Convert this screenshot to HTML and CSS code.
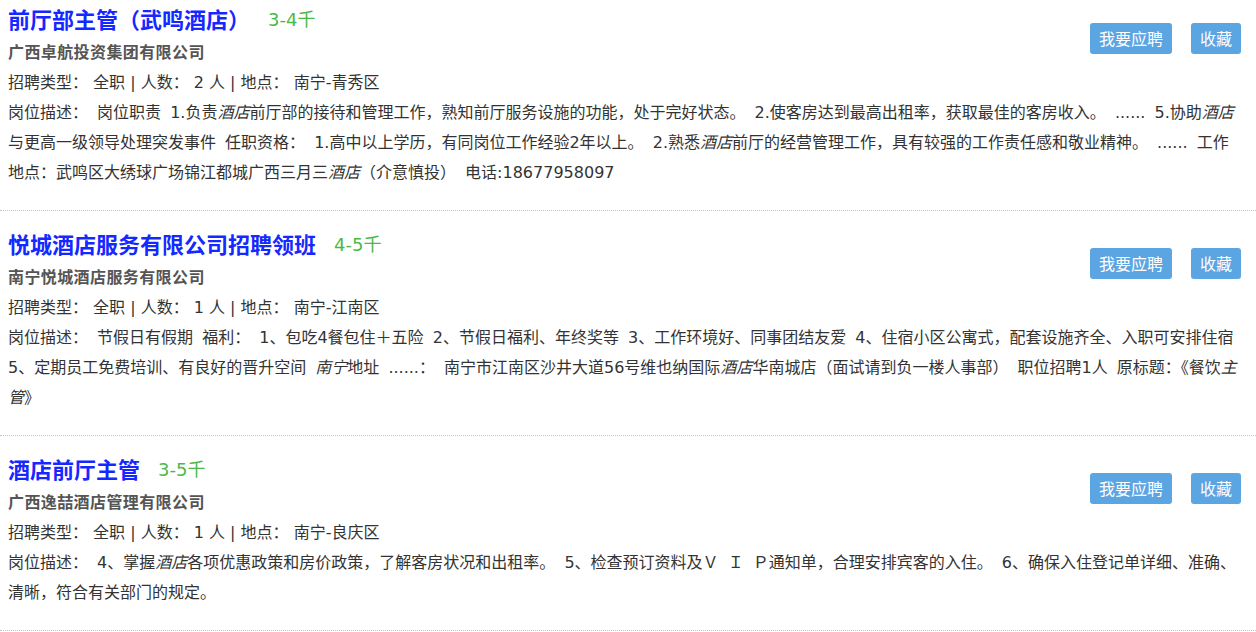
FILE: index.html
```html
<!DOCTYPE html>
<html lang="zh-CN">
<head>
    <meta charset="UTF-8">
    <title>招聘信息</title>
    <link rel="stylesheet" href="styles.css">
</head>
<body>
    <div class="job-list">
        <!-- 职位 1 -->
        <div class="job-item">
            <div class="job-head">
                <div class="job-info">
                    <div class="job-title">
                        <a class="job-name">前厅部主管（武鸣酒店）</a>
                        <span class="job-salary">3-4千</span>
                    </div>
                    <div class="company">广西卓航投资集团有限公司</div>
                </div>
                <div class="actions">
                    <button class="btn">我要应聘</button>
                    <button class="btn">收藏</button>
                </div>
            </div>
            <div class="meta">招聘类型： 全职 | 人数： 2 人 | 地点： 南宁-青秀区</div>
            <div class="desc">岗位描述： 岗位职责 1.负责<em>酒店</em>前厅部的接待和管理工作，熟知前厅服务设施的功能，处于完好状态。 2.使客房达到最高出租率，获取最佳的客房收入。 ...... 5.协助<em>酒店</em>与更高一级领导处理突发事件 任职资格： 1.高中以上学历，有同岗位工作经验2年以上。 2.熟悉<em>酒店</em>前厅的经营管理工作，具有较强的工作责任感和敬业精神。 ...... 工作地点：武鸣区大绣球广场锦江都城广西三月三<em>酒店</em>（介意慎投） 电话:18677958097</div>
        </div>

        <!-- 职位 2 -->
        <div class="job-item">
            <div class="job-head">
                <div class="job-info">
                    <div class="job-title">
                        <a class="job-name">悦城酒店服务有限公司招聘领班</a>
                        <span class="job-salary">4-5千</span>
                    </div>
                    <div class="company">南宁悦城酒店服务有限公司</div>
                </div>
                <div class="actions">
                    <button class="btn">我要应聘</button>
                    <button class="btn">收藏</button>
                </div>
            </div>
            <div class="meta">招聘类型： 全职 | 人数： 1 人 | 地点： 南宁-江南区</div>
            <div class="desc">岗位描述： 节假日有假期 福利： 1、包吃4餐包住＋五险 2、节假日福利、年终奖等 3、工作环境好、同事团结友爱 4、住宿小区公寓式，配套设施齐全、入职可安排住宿 5、定期员工免费培训、有良好的晋升空间 <em>南宁</em>地址 ......： 南宁市江南区沙井大道56号维也纳国际<em>酒店</em>华南城店（面试请到负一楼人事部） 职位招聘1人 原标题：《餐饮<em>主管</em>》</div>
        </div>

        <!-- 职位 3 -->
        <div class="job-item">
            <div class="job-head">
                <div class="job-info">
                    <div class="job-title">
                        <a class="job-name">酒店前厅主管</a>
                        <span class="job-salary">3-5千</span>
                    </div>
                    <div class="company">广西逸喆酒店管理有限公司</div>
                </div>
                <div class="actions">
                    <button class="btn">我要应聘</button>
                    <button class="btn">收藏</button>
                </div>
            </div>
            <div class="meta">招聘类型： 全职 | 人数： 1 人 | 地点： 南宁-良庆区</div>
            <div class="desc">岗位描述： 4、掌握<em>酒店</em>各项优惠政策和房价政策，了解客房状况和出租率。 5、检查预订资料及Ｖ Ｉ Ｐ通知单，合理安排宾客的入住。 6、确保入住登记单详细、准确、清晰，符合有关部门的规定。</div>
        </div>
    </div>
</body>
</html>
```

FILE: styles.css
```css
* {
    box-sizing: border-box;
}

body {
    margin: 0;
    font-family: "DejaVu Sans", "Noto Sans CJK SC", sans-serif;
    font-size: 16px;
    color: #333;
    background: #fff;
    overflow: hidden;
}

.job-list {
    margin-top: -14px;
}

.job-item {
    padding: 15px 15px 22px 8px;
    border-bottom: 1px dotted #c4c4c4;
}

.job-head {
    display: flex;
    justify-content: space-between;
    align-items: flex-start;
}

.job-title {
    display: flex;
    align-items: center;
    height: 34px;
}

.job-name {
    font-family: "Noto Sans CJK SC", sans-serif;
    font-size: 22px;
    font-weight: bold;
    color: #1428ff;
    text-decoration: none;
    cursor: pointer;
}

.job-salary {
    font-size: 18px;
    color: #4cb848;
    margin-left: 18px;
}

.company {
    padding-top: 3px;
    font-weight: bold;
    color: #555;
    line-height: 30px;
    letter-spacing: 0.4px;
}

.actions {
    display: flex;
    gap: 19px;
    margin-top: 22px;
}

.btn {
    height: 31px;
    padding: 0 9px;
    border: none;
    border-radius: 3px;
    background: #5ba5e3;
    color: #fff;
    font-family: "Noto Sans CJK SC", sans-serif;
    font-size: 16px;
    line-height: 31px;
    cursor: pointer;
}

.meta,
.desc {
    line-height: 30px;
}

.desc {
    word-spacing: 4px;
}

.desc em {
    font-style: italic;
}
```
